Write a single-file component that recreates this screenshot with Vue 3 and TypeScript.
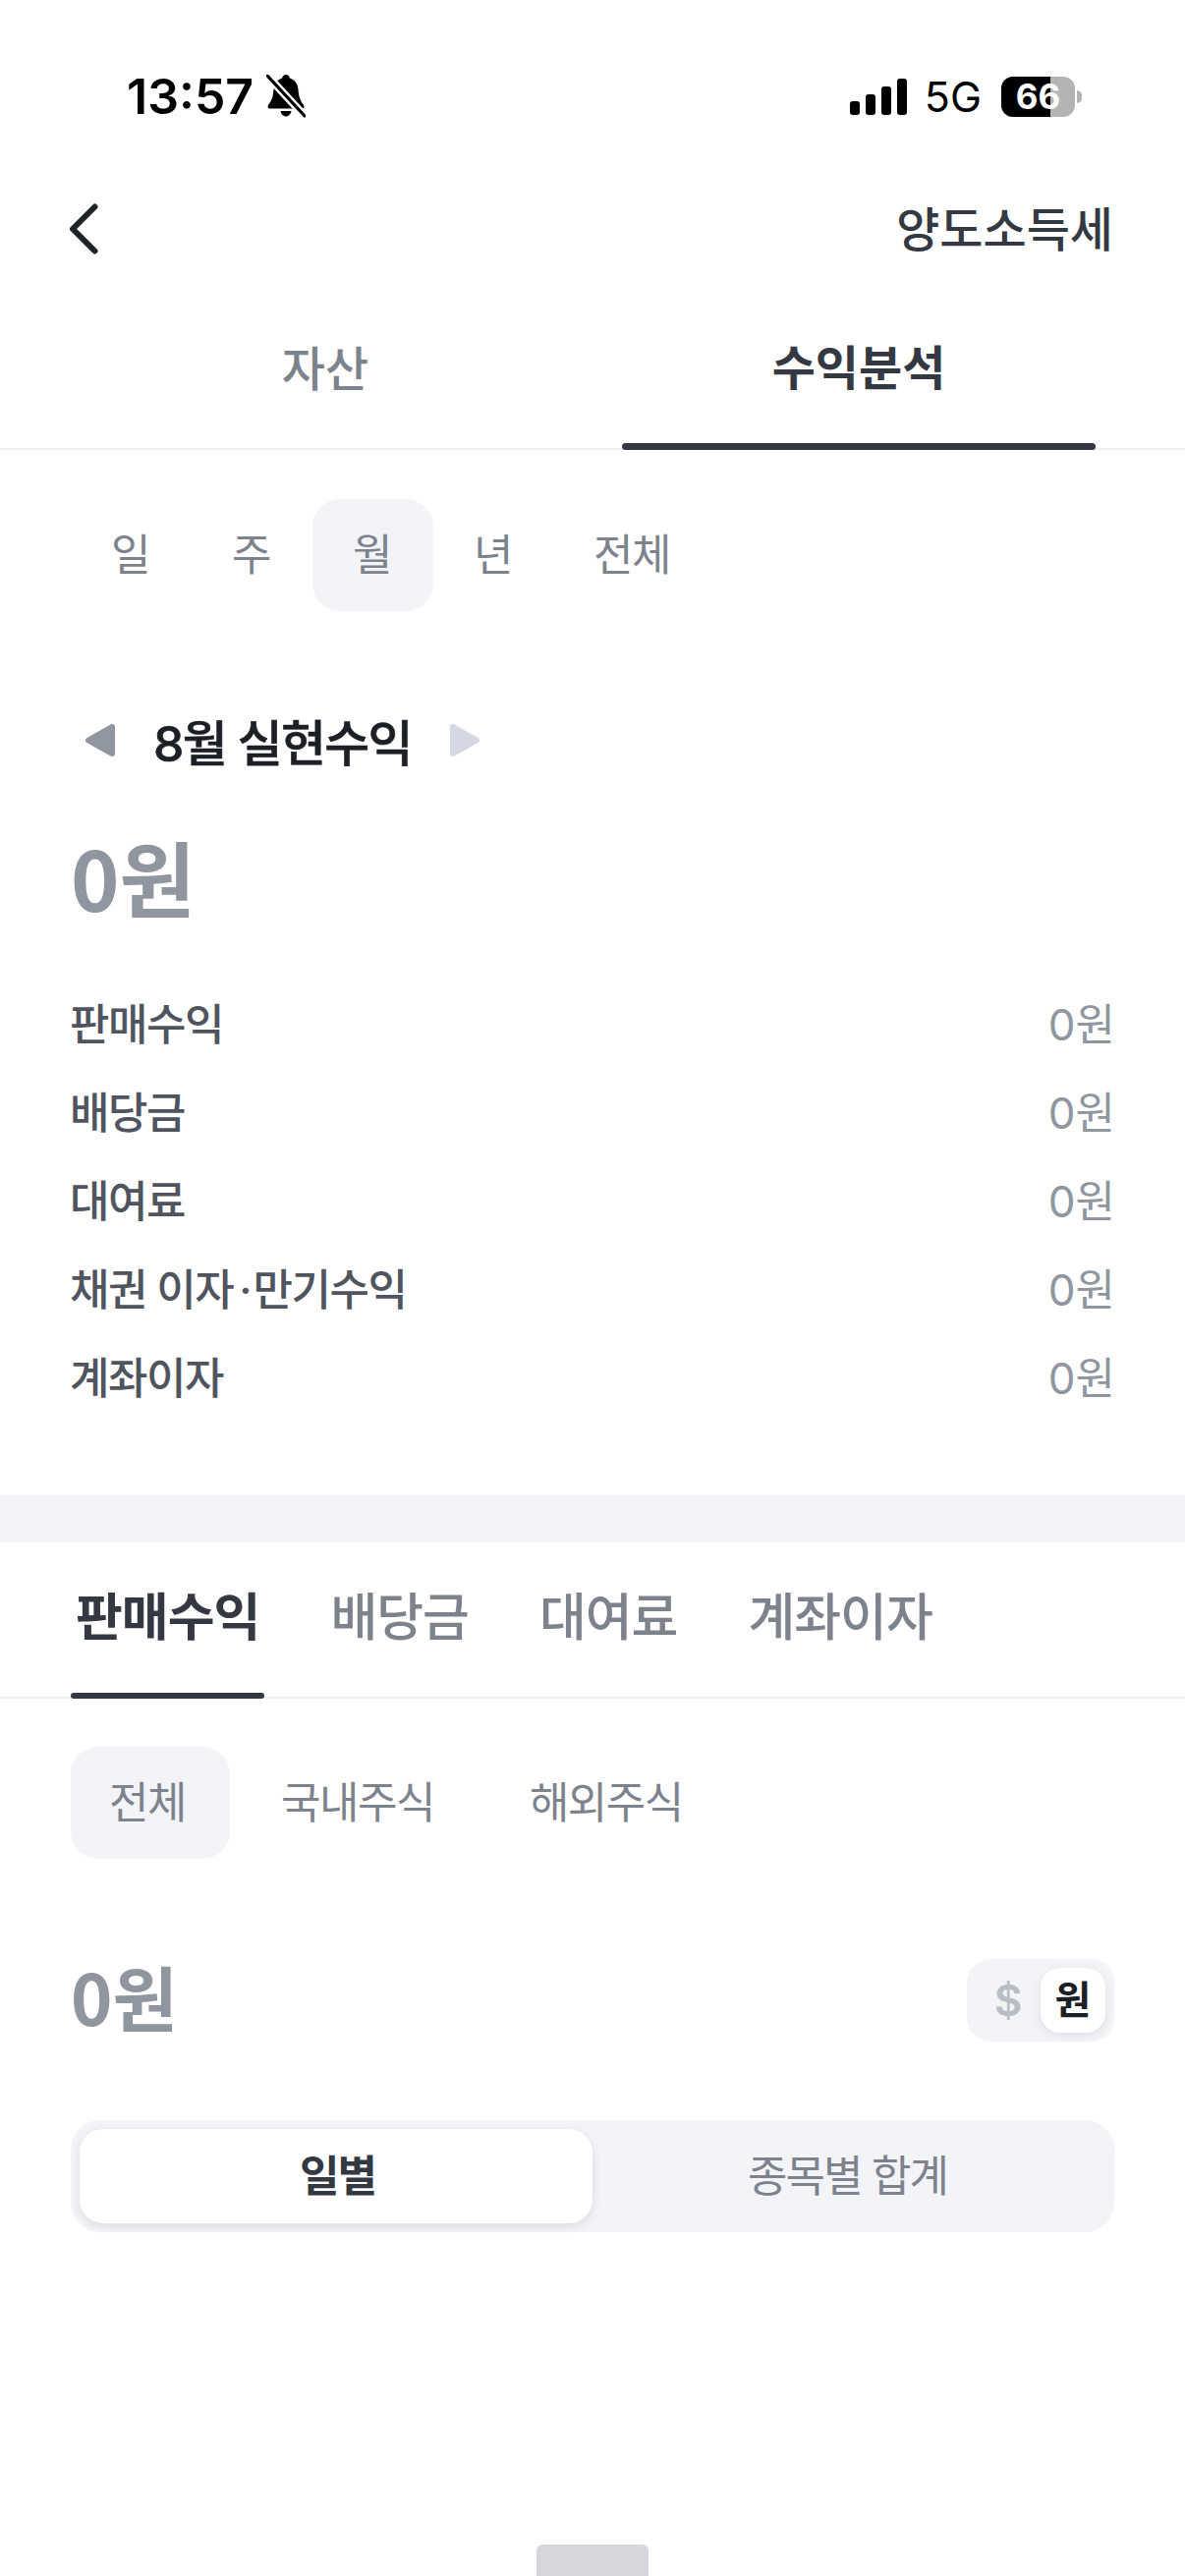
<script setup lang="ts">
const periods = ['일', '주', '월', '년', '전체'];
const rows = ['판매수익', '배당금', '대여료', '채권 이자\u2009·\u200a만기수익', '계좌이자'];
const kinds = ['판매수익', '배당금', '대여료', '계좌이자'];
const markets = ['전체', '국내주식', '해외주식'];
</script>

<template>
  <div class="page">
    <div class="status">
      <div class="status-left">
        <span class="time">13:57</span>
        <svg class="bell" width="40" height="44" viewBox="0 0 40 44">
          <path d="M20 0c2 0 3.500 1.500 3.800 3.500C29 5 32 9.500 32.500 15c.5 6 1.500 11 5.500 16 1 1.500.5 3.500-1.500 3.500H3.500C1.500 34.500 1 32.500 2 31c4-5 5-10 5.500-16C8 9.500 11 5 16.200 3.500 16.500 1.500 18 0 20 0z" fill="#000" />
          <path d="M14.500 37h11c-.5 3-2.800 5.500-5.500 5.500s-5-2.500-5.500-5.500z" fill="#000" />
          <path d="M1 1l38 41" stroke="#fff" stroke-width="8" />
          <path d="M1 1l38 41" stroke="#000" stroke-width="3.200" stroke-linecap="round" />
        </svg>
      </div>
      <div class="status-right">
        <svg width="58" height="37" viewBox="0 0 58 37">
          <rect x="0" y="23" width="10" height="14" rx="3" />
          <rect x="16" y="16" width="10" height="21" rx="3" />
          <rect x="32" y="8" width="10" height="29" rx="3" />
          <rect x="48" y="0" width="10" height="37" rx="3" />
        </svg>
        <span class="net">5G</span>
        <div class="battery">
          <div class="battery-fill"></div>
          <span class="battery-num">66</span>
          <i class="battery-nub"></i>
        </div>
      </div>
    </div>

    <div class="nav">
      <svg width="30" height="52" viewBox="0 0 30 52" fill="none">
        <path d="M26.500 3.500L4 26l22.500 22.500" stroke="#1f2329" stroke-width="6" stroke-linecap="round" stroke-linejoin="round" />
      </svg>
      <span class="nav-title">양도소득세</span>
    </div>

    <div class="main-tabs">
      <div class="main-tab">자산</div>
      <div class="main-tab on">수익분석</div>
    </div>

    <div class="pills periods">
      <div v-for="p in periods" :key="p" class="pill" :class="{ on: p === '월' }">{{ p }}</div>
    </div>

    <div class="month">
      <svg width="32" height="37" viewBox="0 0 32 37">
        <path d="M28 5v27L4 18.500z" fill="#8f96a0" stroke="#8f96a0" stroke-width="6" stroke-linejoin="round" />
      </svg>
      <span class="month-label">8월 실현수익</span>
      <svg width="32" height="37" viewBox="0 0 32 37">
        <path d="M4 5v27l24-13.500z" fill="#d3d8e2" stroke="#d3d8e2" stroke-width="6" stroke-linejoin="round" />
      </svg>
    </div>

    <div class="total">0원</div>

    <div class="list">
      <div v-for="r in rows" :key="r" class="list-row">
        <span class="list-name">{{ r }}</span>
        <span class="list-val">0원</span>
      </div>
    </div>

    <div class="band"></div>

    <div class="kind-tabs">
      <div v-for="(k, i) in kinds" :key="k" class="kind" :class="{ on: i === 0 }">{{ k }}</div>
    </div>

    <div class="pills markets">
      <div v-for="m in markets" :key="m" class="pill" :class="{ on: m === '전체' }">{{ m }}</div>
    </div>

    <div class="amount">
      <span class="amount-num">0원</span>
      <div class="unit">
        <span class="unit-usd">$</span>
        <span class="unit-krw">원</span>
      </div>
    </div>

    <div class="segment">
      <div class="seg on">일별</div>
      <div class="seg">종목별 합계</div>
    </div>

    <div class="peek"></div>
  </div>
</template>

<style scoped>
.page {
  width: 1206px;
  height: 2622px;
  overflow: hidden;
  display: flex;
  flex-direction: column;
  background: #fff;
  font-family: Inter, "Noto Sans CJK KR", sans-serif;
  color: #333842;
}

.status {
  height: 196px;
  flex: none;
  display: flex;
  justify-content: space-between;
  align-items: center;
  padding: 0 112px 0 129px;
  color: #000;
}
.status-left,
.status-right {
  display: flex;
  align-items: center;
}
.time {
  font-size: 50px;
  font-weight: 600;
  line-height: 60px;
}
.bell {
  margin-left: 13px;
}
.net {
  font-size: 43px;
  line-height: 50px;
  margin-left: 18px;
}
.battery {
  position: relative;
  width: 75px;
  height: 41px;
  margin-left: 20px;
  border-radius: 12px;
  background: #b4b4b4;
  text-align: center;
  font-size: 35px;
  font-weight: 700;
  line-height: 41px;
  color: #fff;
}
.battery-fill {
  position: absolute;
  left: 0;
  top: 0;
  bottom: 0;
  width: 50px;
  background: #000;
  border-radius: 12px 0 0 12px;
}
.battery-num {
  position: relative;
}
.battery-nub {
  position: absolute;
  right: -7px;
  top: 14px;
  width: 5px;
  height: 13px;
  background: #b4b4b4;
  border-radius: 0 6px 6px 0;
}

.nav {
  height: 74px;
  flex: none;
  display: flex;
  justify-content: space-between;
  align-items: center;
  padding: 0 73px 0 70px;
}
.nav-title {
  font-size: 48px;
  font-weight: 500;
  margin-bottom: 6px;
}

.main-tabs {
  height: 188px;
  flex: none;
  display: flex;
  gap: 62px;
  padding-left: 89px;
  border-bottom: 2px solid #eef0f2;
  box-sizing: border-box;
}
.main-tab {
  position: relative;
  box-sizing: border-box;
  width: 482px;
  padding: 77px 0 0 2px;
  text-align: center;
  font-size: 48px;
  line-height: 58px;
  font-weight: 500;
  color: #7d838c;
}
.main-tab.on {
  color: #333842;
  font-weight: 700;
  padding: 76px 0 0;
}
.main-tab.on::after {
  content: '';
  position: absolute;
  left: 0;
  right: 0;
  bottom: -2px;
  height: 7px;
  border-radius: 4px;
  background: #333842;
}

.pills {
  display: flex;
  padding-left: 72px;
  flex: none;
}
.pill {
  height: 114px;
  box-sizing: border-box;
  padding: 0 45px 6px 39px;
  display: flex;
  align-items: center;
  font-size: 44px;
  letter-spacing: -1.500px;
  color: #7d838c;
  border-radius: 28px;
}
.pill.on {
  background: #f2f4f8;
}
.periods {
  margin-top: 50px;
}
.periods .pill {
  min-width: 123px;
  padding: 0 42px 6px 40px;
  justify-content: center;
}
.markets {
  margin-top: 49px;
  gap: 13px;
}

.month {
  margin-top: 100px;
  height: 62px;
  flex: none;
  display: flex;
  align-items: center;
  padding-left: 86px;
}
.month-label {
  margin: 0 38px;
  font-size: 50px;
  font-weight: 500;
  letter-spacing: -1.700px;
  -webkit-text-stroke: 0.6px #1c1f26;
  color: #1c1f26;
}

.total {
  margin-top: 58px;
  padding-left: 72px;
  height: 100px;
  flex: none;
  font-family: "Noto Sans CJK KR", sans-serif;
  font-size: 84px;
  line-height: 99px;
  font-weight: 700;
  color: #8f96a0;
}

.list {
  margin-top: 56px;
  padding: 0 71px;
  flex: none;
}
.list-row {
  height: 90px;
  box-sizing: border-box;
  padding-bottom: 6px;
  display: flex;
  justify-content: space-between;
  align-items: center;
  font-size: 44px;
  font-weight: 500;
  color: #4f545e;
}
.list-name {
  letter-spacing: -1.500px;
}
.list-val {
  font-weight: 400;
  color: #8f96a0;
}

.band {
  margin-top: 74px;
  height: 48px;
  flex: none;
  background: #f2f4f7;
}

.kind-tabs {
  height: 159px;
  flex: none;
  box-sizing: border-box;
  display: flex;
  gap: 72px;
  padding-left: 77px;
  border-bottom: 2px solid #eef0f2;
}
.kind {
  position: relative;
  padding-top: 48px;
  font-size: 52px;
  line-height: 58px;
  font-weight: 500;
  letter-spacing: -1px;
  color: #7d838c;
}
.kind.on {
  font-weight: 700;
  color: #333842;
}
.kind.on::after {
  content: '';
  position: absolute;
  left: -5px;
  right: -5px;
  bottom: -2px;
  height: 6px;
  border-radius: 3px;
  background: #333842;
}

.amount {
  margin-top: 102px;
  height: 84px;
  flex: none;
  display: flex;
  justify-content: space-between;
  align-items: center;
  padding: 0 72px;
}
.amount-num {
  margin-bottom: 10px;
  font-family: "Noto Sans CJK KR", sans-serif;
  font-size: 72px;
  line-height: 84px;
  font-weight: 700;
  color: #8f96a0;
}
.unit {
  width: 150px;
  height: 84px;
  box-sizing: border-box;
  padding: 10px 9px;
  display: flex;
  align-items: center;
  justify-content: space-between;
  border-radius: 24px;
  background: #f2f4f8;
}
.unit-usd {
  width: 66px;
  text-align: center;
  font-size: 44px;
  font-weight: 600;
  color: #b9bdc6;
}
.unit-krw {
  width: 66px;
  height: 66px;
  border-radius: 20px;
  background: #fff;
  box-shadow: 0 3px 10px rgba(40, 46, 60, 0.1);
  text-align: center;
  font-size: 40px;
  line-height: 66px;
  font-weight: 700;
  color: #1c1f26;
}

.segment {
  margin: 80px 72px 0;
  height: 114px;
  flex: none;
  box-sizing: border-box;
  padding: 9px;
  display: flex;
  border-radius: 30px;
  background: #f2f4f8;
}
.seg {
  flex: 1;
  box-sizing: border-box;
  padding: 0 3px 6px 0;
  display: flex;
  align-items: center;
  justify-content: center;
  font-size: 44px;
  letter-spacing: -2px;
  color: #7d838c;
  border-radius: 24px;
}
.seg.on {
  flex: none;
  width: 522px;
  padding: 0 0 6px 3px;
  background: #fff;
  font-weight: 700;
  color: #333842;
  box-shadow: 0 3px 10px rgba(40, 46, 60, 0.12);
}

.peek {
  margin: auto auto 0;
  width: 114px;
  height: 32px;
  flex: none;
  border-radius: 6px 6px 0 0;
  background: #d6d7dc;
}
</style>
